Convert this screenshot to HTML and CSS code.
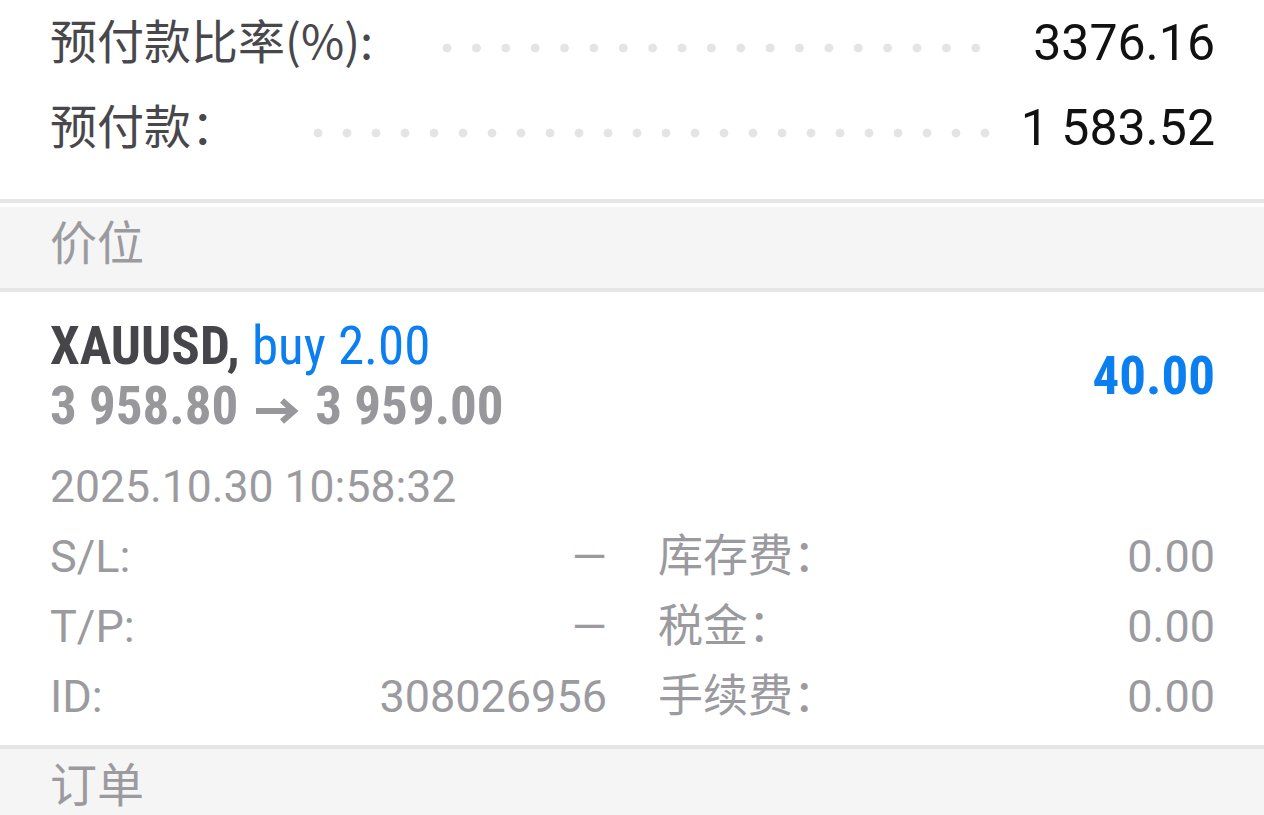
FILE: index.html
```html
<!DOCTYPE html>
<html lang="zh-CN">
<head>
<meta charset="utf-8">
<title>交易</title>
<link rel="stylesheet" href="styles.css">
</head>
<body>
<main class="screen">
  <section class="summary">
    <div class="kv">
      <span class="kv-label">预付款比率(%):</span>
      <span class="leader leader-a"></span>
      <span class="kv-value">3376.16</span>
    </div>
    <div class="kv">
      <span class="kv-label">预付款：</span>
      <span class="leader leader-b"></span>
      <span class="kv-value">1 583.52</span>
    </div>
  </section>

  <div class="section-head section-head--first">价位</div>

  <article class="position">
    <div class="pos-top">
      <div class="pos-main">
        <div class="pos-title"><span class="pos-sym">XAUUSD,</span> <span class="pos-side">buy 2.00</span></div>
        <div class="pos-prices">3 958.80<svg class="pos-arrow" width="44" height="28" viewBox="0 0 44 28" aria-hidden="true"><path d="M1 14 H38 M27 3.5 L39 14 L27 24.5" fill="none" stroke="#98989c" stroke-width="6"/></svg>3 959.00</div>
      </div>
      <div class="pos-profit">40.00</div>
    </div>
    <div class="pos-time">2025.10.30 10:58:32</div>
    <div class="pos-grid">
      <div class="cell"><span class="cell-label">S/L:</span><span class="cell-value">—</span></div>
      <div class="cell"><span class="cell-label">库存费：</span><span class="cell-value">0.00</span></div>
      <div class="cell"><span class="cell-label">T/P:</span><span class="cell-value">—</span></div>
      <div class="cell"><span class="cell-label">税金：</span><span class="cell-value">0.00</span></div>
      <div class="cell"><span class="cell-label">ID:</span><span class="cell-value">308026956</span></div>
      <div class="cell"><span class="cell-label">手续费：</span><span class="cell-value">0.00</span></div>
    </div>
  </article>

  <div class="section-head section-head--last">订单</div>
</main>
</body>
</html>
```
FILE: styles.css
```css
html, body {
  margin: 0;
  padding: 0;
  background: #ffffff;
}

body {
  font-family: Roboto, "Noto Sans CJK SC", sans-serif;
  color: #48484c;
}

.screen {
  width: 1264px;
  height: 815px;
  overflow: hidden;
}

/* summary rows */
.summary {
  padding: 0 49px 29px 50px;
}

.kv {
  display: flex;
  align-items: center;
  height: 85px;
}

.kv-label {
  font-family: "Noto Sans CJK SC", Roboto, sans-serif;
  font-size: 47px;
  line-height: 47px;
  padding-bottom: 8px;
  color: #48484c;
  white-space: nowrap;
}

.kv-value {
  font-size: 50px;
  line-height: 50px;
  color: #111111;
  white-space: nowrap;
}

.leader {
  flex: 1;
  align-self: stretch;
  background-image: radial-gradient(circle at 14px 48px, #e4e4e4 0, #e4e4e4 4px, rgba(228,228,228,0) 4.8px);
  background-size: 28px 100%;
  background-repeat: space no-repeat;
}

.leader-a {
  margin: 0 43px 0 60px;
}

.leader-b {
  margin: 0 22px 0 66px;
}

/* section headers */
.section-head {
  height: 72px;
  box-sizing: content-box;
  border-top: 4px solid #e6e6e6;
  border-bottom: 4px solid #e6e6e6;
  background: #f5f5f5;
  padding: 9px 0 0 50px;
  font-family: "Noto Sans CJK SC", Roboto, sans-serif;
  font-size: 47px;
  line-height: 47px;
  color: #9b9b9f;
}

.section-head--first {
  padding-top: 13px;
  box-shadow: inset 0 4px 0 #ffffff;
}

.section-head--last {
  height: 57px;
  border-bottom: 0;
}

/* position card */
.position {
  padding: 24px 49px 13px 50px;
}

.pos-top {
  display: flex;
  align-items: center;
  justify-content: space-between;
}

.pos-title,
.pos-prices {
  font-family: "Roboto Condensed", Roboto, sans-serif;
  font-size: 53px;
  line-height: 60px;
  white-space: nowrap;
}

.pos-sym {
  font-weight: 700;
  color: #46464a;
}

.pos-side {
  font-weight: 400;
  color: #0b7ef0;
}

.pos-prices {
  font-weight: 700;
  color: #98989c;
}

.pos-arrow {
  margin: 0 16px 0 17px;
  vertical-align: -1px;
}

.pos-profit {
  font-family: "Roboto Condensed", Roboto, sans-serif;
  font-weight: 700;
  font-size: 53px;
  line-height: 60px;
  color: #0b7ef0;
}

.pos-time {
  margin-top: 16px;
  font-size: 44.5px;
  line-height: 70px;
  color: #9b9b9f;
}

.pos-grid {
  display: grid;
  grid-template-columns: 1fr 1fr;
  column-gap: 51px;
}

.cell {
  display: flex;
  justify-content: space-between;
  align-items: baseline;
  font-size: 45px;
  line-height: 70px;
  color: #9b9b9f;
  white-space: nowrap;
}
```
